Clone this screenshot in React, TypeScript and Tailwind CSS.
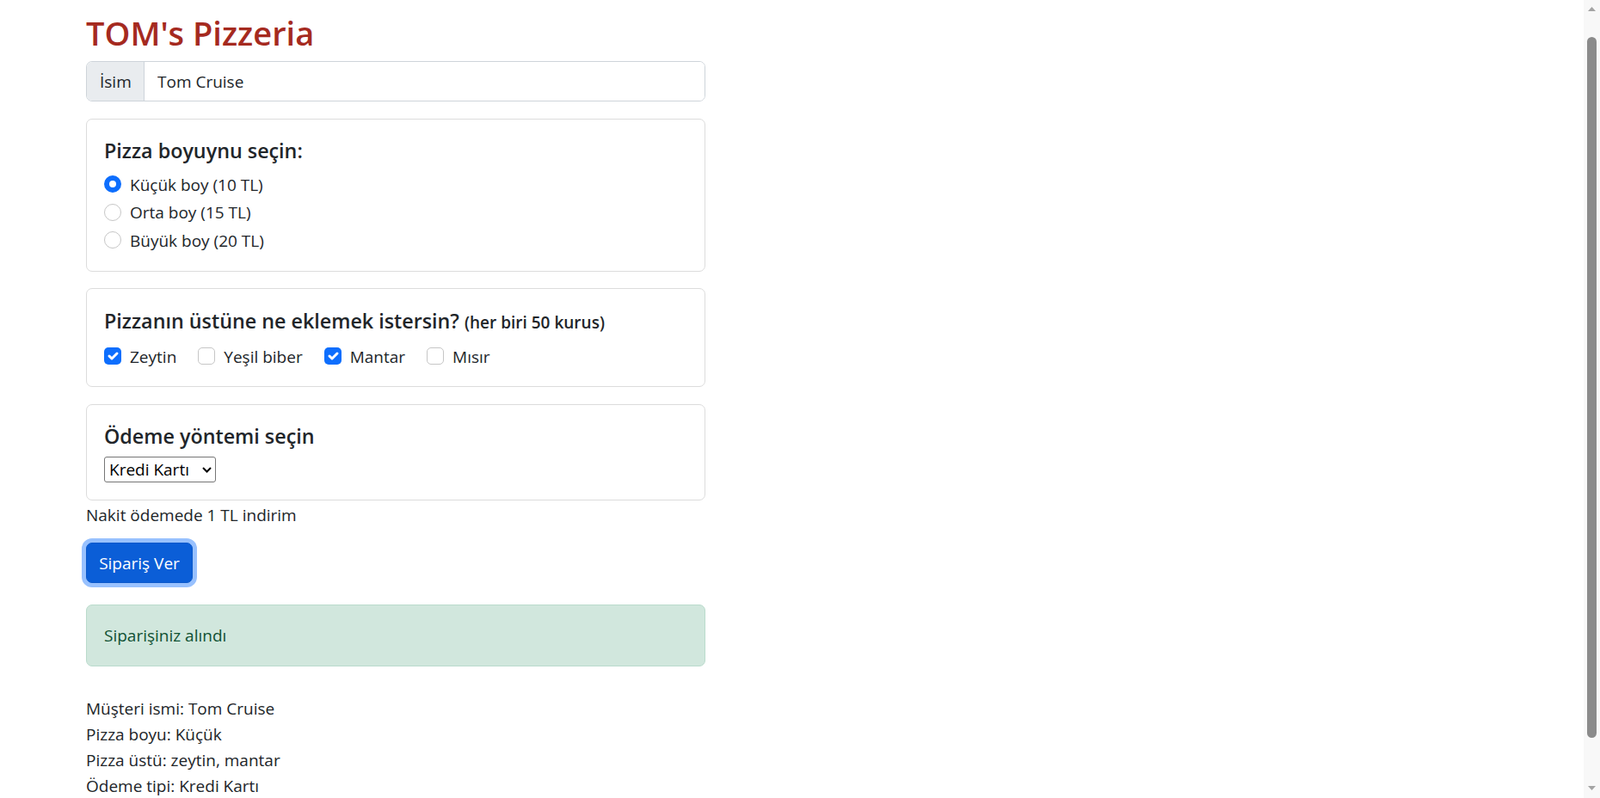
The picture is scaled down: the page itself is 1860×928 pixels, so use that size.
import React from "react";

function Radio({ checked, label, last }: { checked?: boolean; label: string; last?: boolean }) {
  return (
    <label className={last ? "flex items-center gap-[10px] h-[30px] mb-[1px]" : "flex items-center gap-[10px] h-[30px] mb-[2.5px]"}>
      {checked ? (
        <span className="box-border block w-[20px] h-[20px] rounded-full border-[6px] border-[#0d6efd] bg-white" />
      ) : (
        <span className="box-border block w-[20px] h-[20px] rounded-full border border-[#c6c6c6] bg-white" />
      )}
      <span className="pt-[1px]">{label}</span>
    </label>
  );
}

function Check({ checked, label }: { checked?: boolean; label: string }) {
  return (
    <label className="flex items-center gap-[10px] h-[30px] mr-[25px]">
      {checked ? (
        <span className="box-border flex items-center justify-center w-[20px] h-[20px] rounded-[5px] bg-[#0d6efd]">
          <svg width="20" height="20" viewBox="0 0 20 20">
            <path d="M6 10l3 3 6-6" fill="none" stroke="#fff" strokeWidth="3" strokeLinecap="round" strokeLinejoin="round" />
          </svg>
        </span>
      ) : (
        <span className="box-border block w-[20px] h-[20px] rounded-[5px] border border-[#c6c6c6] bg-white" />
      )}
      <span className="pt-[1px]">{label}</span>
    </label>
  );
}

function FakeScrollbar() {
  return (
    <div className="fixed right-0 top-0 bottom-0 w-[19px] bg-[#f8f8f8] flex flex-col items-center">
      <div className="h-[43px] w-full flex justify-center pt-[8px]">
        <svg width="9" height="5" viewBox="0 0 9 5">
          <path d="M0 5L4.5 0L9 5Z" fill="#a3a3a3" />
        </svg>
      </div>
      <div className="w-[11px] h-[815px] rounded-full bg-[#8b8b8b]" />
      <div className="flex-1" />
      <div className="h-[20px] w-full flex justify-center pt-[6px]">
        <svg width="9" height="5" viewBox="0 0 9 5">
          <path d="M0 0L4.5 5L9 0Z" fill="#a3a3a3" />
        </svg>
      </div>
    </div>
  );
}

export default function App() {
  return (
    <div className="min-h-screen bg-white font-['Open_Sans','Noto_Sans',sans-serif] text-[#212529] text-[19px] leading-[30px]">
      <div className="ml-[100px] w-[720px] pt-[15px] pb-[85px]">
        <h1 className="text-[38px] leading-[46px] font-semibold text-[#a52a1f] mb-[10px]">TOM's Pizzeria</h1>

        <div className="flex h-[47px] rounded-[7px] border border-[#ced4da] overflow-hidden mb-[20px]">
          <span className="flex items-center w-[67px] pl-[15px] bg-[#e9ecef] border-r border-[#ced4da]">İsim</span>
          <input
            className="flex-1 pl-[15px] bg-white outline-none text-[#212529]"
            defaultValue="Tom Cruise"
          />
        </div>

        <div className="rounded-[7px] border border-[#dcdcdc] p-[20px] mb-[19px]">
          <h5 className="text-[23.3px] leading-[30px] font-semibold pt-[1px] mb-[9px]">Pizza boyuynu seçin:</h5>
          <Radio checked label="Küçük boy (10 TL)" />
          <Radio label="Orta boy (15 TL)" />
          <Radio last label="Büyük boy (20 TL)" />
        </div>

        <div className="rounded-[7px] border border-[#dcdcdc] p-[20px] mb-[20px]">
          <h5 className="text-[23.3px] leading-[30px] font-semibold pt-[1.5px] mb-[9.5px]">
            Pizzanın üstüne ne eklemek istersin? <small className="text-[19px]">(her biri 50 kurus)</small>
          </h5>
          <div className="flex items-center">
            <Check checked label="Zeytin" />
            <Check label="Yeşil biber" />
            <Check checked label="Mantar" />
            <Check label="Mısır" />
          </div>
        </div>

        <div className="rounded-[7px] border border-[#dcdcdc] p-[20px]">
          <h5 className="text-[23.3px] leading-[30px] font-semibold pt-[1px] mb-[9px]">Ödeme yöntemi seçin</h5>
          <div className="relative w-[130px] h-[30px]">
            <select
              defaultValue="kredi"
              className="appearance-none box-border w-[130px] h-[30px] pl-[5px] pr-[24px] border border-[#767676] rounded-[3px] bg-white text-[19px] leading-[28px] text-black outline-none"
            >
              <option value="kredi">Kredi Kartı</option>
              <option value="nakit">Nakit</option>
            </select>
            <svg
              className="absolute right-[5px] top-[12px] pointer-events-none"
              width="11"
              height="7"
              viewBox="0 0 11 7"
            >
              <path d="M1 1l4.5 4.5L10 1" fill="none" stroke="#000" strokeWidth="2" />
            </svg>
          </div>
        </div>

        <p className="pt-[2px] mb-[17px]">Nakit ödemede 1 TL indirim</p>

        <div className="mb-[25px]">
          <button className="box-border flex items-center justify-center w-[124px] h-[47px] rounded-[7px] bg-[#0b5ed7] border border-[#0a58ca] text-white shadow-[0_0_0_5px_#98c1fe]">
            Sipariş Ver
          </button>
        </div>

        <div className="rounded-[7px] border border-[#badbcc] bg-[#d1e7dd] text-[#0f5132] px-[20px] py-[20px] mb-[34px]">
          Siparişiniz alındı
        </div>

        <div>Müşteri ismi: Tom Cruise</div>
        <div>Pizza boyu: Küçük</div>
        <div>Pizza üstü: zeytin, mantar</div>
        <div>Ödeme tipi: Kredi Kartı</div>
      </div>
      <FakeScrollbar />
    </div>
  );
}
